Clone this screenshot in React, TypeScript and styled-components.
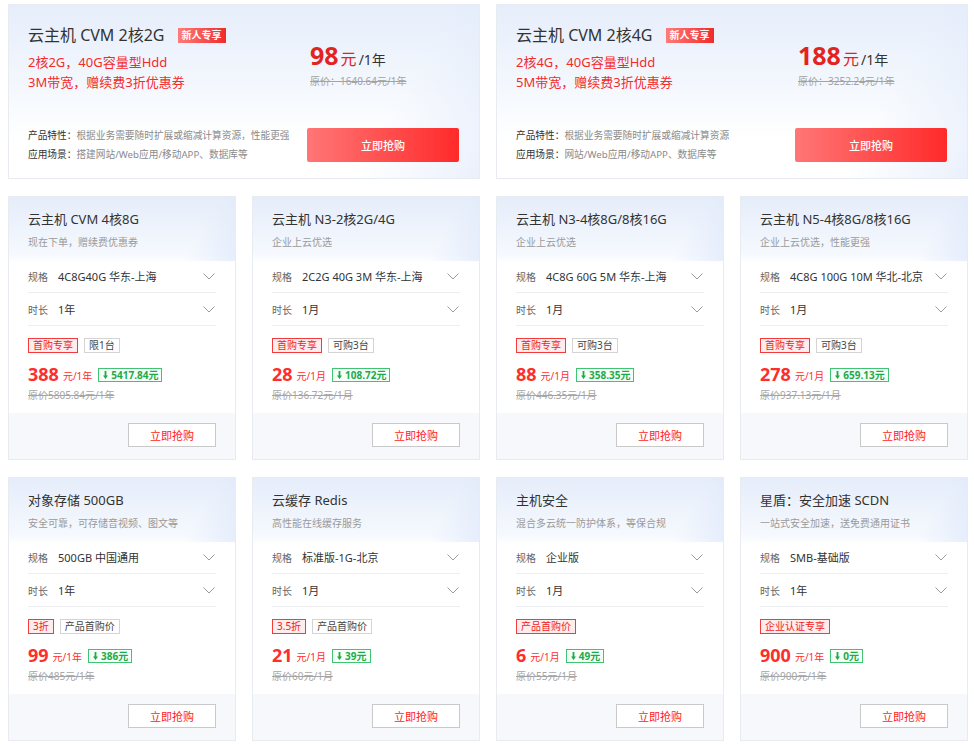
import React, { FC } from 'react';
import styled, { createGlobalStyle } from 'styled-components';

const GlobalStyle = createGlobalStyle`
  * {
    box-sizing: border-box;
  }
  body {
    margin: 0;
    background: #fff;
    color: #333;
    font-family: "Noto Sans", "Noto Sans CJK SC", sans-serif;
  }
`;

type TagKind = 'red' | 'gray';

interface Tag {
  text: string;
  kind: TagKind;
}

interface Product {
  title: string;
  sub: string;
  spec: string;
  dur: string;
  tags: Tag[];
  price: string;
  unit: string;
  save: string;
  orig: string;
}

interface Hero {
  title: string;
  lines: string[];
  price: string;
  orig: string;
  feature: string;
  scene: string;
}

const heroes: Hero[] = [
  {
    title: '云主机 CVM 2核2G',
    lines: ['2核2G，40G容量型Hdd', '3M带宽，赠续费3折优惠券'],
    price: '98',
    orig: '原价：1640.64元/1年',
    feature: '根据业务需要随时扩展或缩减计算资源，性能更强',
    scene: '搭建网站/Web应用/移动APP、数据库等',
  },
  {
    title: '云主机 CVM 2核4G',
    lines: ['2核4G，40G容量型Hdd', '5M带宽，赠续费3折优惠券'],
    price: '188',
    orig: '原价：3252.24元/1年',
    feature: '根据业务需要随时扩展或缩减计算资源',
    scene: '网站/Web应用/移动APP、数据库等',
  },
];

const firstBuy: Tag = { text: '首购专享', kind: 'red' };
const buy3: Tag = { text: '可购3台', kind: 'gray' };

const products: Product[] = [
  {
    title: '云主机 CVM 4核8G',
    sub: '现在下单，赠续费优惠券',
    spec: '4C8G40G 华东-上海',
    dur: '1年',
    tags: [firstBuy, { text: '限1台', kind: 'gray' }],
    price: '388',
    unit: '元/1年',
    save: '5417.84元',
    orig: '原价5805.84元/1年',
  },
  {
    title: '云主机 N3-2核2G/4G',
    sub: '企业上云优选',
    spec: '2C2G 40G 3M 华东-上海',
    dur: '1月',
    tags: [firstBuy, buy3],
    price: '28',
    unit: '元/1月',
    save: '108.72元',
    orig: '原价136.72元/1月',
  },
  {
    title: '云主机 N3-4核8G/8核16G',
    sub: '企业上云优选',
    spec: '4C8G 60G 5M 华东-上海',
    dur: '1月',
    tags: [firstBuy, buy3],
    price: '88',
    unit: '元/1月',
    save: '358.35元',
    orig: '原价446.35元/1月',
  },
  {
    title: '云主机 N5-4核8G/8核16G',
    sub: '企业上云优选，性能更强',
    spec: '4C8G 100G 10M 华北-北京',
    dur: '1月',
    tags: [firstBuy, buy3],
    price: '278',
    unit: '元/1月',
    save: '659.13元',
    orig: '原价937.13元/1月',
  },
  {
    title: '对象存储 500GB',
    sub: '安全可靠，可存储音视频、图文等',
    spec: '500GB 中国通用',
    dur: '1年',
    tags: [
      { text: '3折', kind: 'red' },
      { text: '产品首购价', kind: 'gray' },
    ],
    price: '99',
    unit: '元/1年',
    save: '386元',
    orig: '原价485元/1年',
  },
  {
    title: '云缓存 Redis',
    sub: '高性能在线缓存服务',
    spec: '标准版-1G-北京',
    dur: '1月',
    tags: [
      { text: '3.5折', kind: 'red' },
      { text: '产品首购价', kind: 'gray' },
    ],
    price: '21',
    unit: '元/1月',
    save: '39元',
    orig: '原价60元/1月',
  },
  {
    title: '主机安全',
    sub: '混合多云统一防护体系，等保合规',
    spec: '企业版',
    dur: '1月',
    tags: [{ text: '产品首购价', kind: 'red' }],
    price: '6',
    unit: '元/1月',
    save: '49元',
    orig: '原价55元/1月',
  },
  {
    title: '星盾：安全加速 SCDN',
    sub: '一站式安全加速，送免费通用证书',
    spec: 'SMB-基础版',
    dur: '1年',
    tags: [{ text: '企业认证专享', kind: 'red' }],
    price: '900',
    unit: '元/1年',
    save: '0元',
    orig: '原价900元/1年',
  },
];

const StyledPage = styled.div`
  display: grid;
  grid-template-columns: repeat(4, 228px);
  column-gap: 16px;
  row-gap: 17px;
  padding: 4px 0 0 8px;
`;

/* big promo cards */

const StyledHeroCard = styled.div`
  grid-column: span 2;
  height: 175px;
  display: grid;
  grid-template-columns: 1fr 152px;
  padding: 19px 20px 14px 19px;
  border: 1px solid #e8ebf0;
  background:
    linear-gradient(120deg, rgba(255, 255, 255, 0) 78%, rgba(220, 230, 250, 0.6) 100%),
    linear-gradient(180deg, #e6eefb 0%, #f3f7fd 45%, #ffffff 78%);
`;

const StyledHeroLeft = styled.div`
  display: flex;
  flex-direction: column;
  justify-content: space-between;
`;

const StyledHeroRight = styled.div`
  display: flex;
  flex-direction: column;
  justify-content: space-between;
  padding-bottom: 2px;
`;

const StyledHeroTitleRow = styled.div`
  display: flex;
  align-items: center;
  gap: 13px;
  height: 22px;
`;

const StyledHeroTitle = styled.div`
  font-size: 16px;
  line-height: 22px;
  color: #333;
`;

const StyledNewBadge = styled.span`
  height: 15px;
  padding: 0 4px;
  font-size: 10px;
  line-height: 15px;
  font-weight: 700;
  color: #fff;
  background: linear-gradient(90deg, #ff7b7b, #f12a2a);
`;

const StyledHeroLines = styled.div`
  margin-top: 6px;
  font-size: 13px;
  line-height: 20px;
  color: #f42b2b;
`;

const StyledHeroInfo = styled.div`
  font-size: 9.7px;
  line-height: 19px;
  color: #8a8a8a;
  white-space: nowrap;
`;

const StyledInfoLabel = styled.span`
  color: #333;
`;

const StyledHeroPrice = styled.div`
  display: flex;
  align-items: baseline;
  margin: 16px 0 0 3px;
  height: 30px;
  line-height: 30px;
`;

const StyledHeroAmount = styled.span`
  font-size: 25px;
  font-weight: 700;
  color: #e3231f;
`;

const StyledHeroYuan = styled.span`
  margin-left: 2px;
  font-size: 16px;
  color: #e3231f;
`;

const StyledHeroPer = styled.span`
  margin-left: 2px;
  font-size: 14px;
  color: #333;
`;

const StyledHeroOrig = styled.div`
  margin: 3px 0 0 3px;
  font-size: 10px;
  line-height: 16px;
  color: #a3a3a3;
  text-decoration: line-through;
`;

const StyledHeroPriceBox = styled.div``;

const StyledHeroButton = styled.button`
  width: 152px;
  height: 34px;
  border: none;
  border-radius: 2px;
  font-family: inherit;
  font-size: 11px;
  font-weight: 500;
  color: #fff;
  background: linear-gradient(90deg, #ff7676, #ff2a2a);
  cursor: pointer;
`;

/* small product cards */

const StyledCard = styled.div`
  display: flex;
  flex-direction: column;
  height: 264px;
  border: 1px solid #e8ebf0;
  background:
    linear-gradient(120deg, rgba(255, 255, 255, 0) 80%, rgba(214, 226, 250, 0.55) 100%) 0 0 / 100% 64px no-repeat,
    linear-gradient(180deg, #e5edfa 0px, #f6f9fe 58px, #ffffff 66px);
`;

const StyledCardBody = styled.div`
  padding: 12px 19px 0 19px;
`;

const StyledCardTitle = styled.div`
  font-size: 13px;
  line-height: 20px;
  color: #333;
  white-space: nowrap;
`;

const StyledCardSub = styled.div`
  margin-top: 5px;
  font-size: 10px;
  line-height: 16px;
  color: #9a9a9a;
  white-space: nowrap;
`;

const StyledSelects = styled.div`
  margin-top: 10px;
`;

const StyledSelectRow = styled.div`
  display: flex;
  align-items: center;
  height: 33px;
  border-bottom: 1px solid #eceef2;
`;

const StyledSelectLabel = styled.span`
  margin-right: 10px;
  font-size: 10px;
  color: #666;
`;

const StyledSelectValue = styled.span`
  flex: 1;
  font-size: 11px;
  color: #333;
  white-space: nowrap;
`;

const StyledChevron = styled.svg`
  margin-right: 1px;
`;

const StyledTags = styled.div`
  display: flex;
  gap: 6px;
  margin-top: 12px;
`;

const StyledTag = styled.span<{ $kind: TagKind }>`
  height: 15px;
  padding: 0 4px;
  font-size: 10px;
  line-height: 13px;
  border: 1px solid ${(p) => (p.$kind === 'red' ? '#f33b3b' : '#d4d4d4')};
  color: ${(p) => (p.$kind === 'red' ? '#f01c1c' : '#444')};
  background: ${(p) => (p.$kind === 'red' ? '#ffecec' : '#fff')};
`;

const StyledPriceRow = styled.div`
  display: flex;
  align-items: center;
  margin-top: 9px;
  height: 24px;
`;

const StyledAmount = styled.span`
  font-size: 18px;
  line-height: 24px;
  font-weight: 700;
  color: #ff2d2d;
`;

const StyledUnit = styled.span`
  margin: 3px 0 0 4px;
  font-size: 10px;
  color: #ff2d2d;
`;

const StyledSave = styled.span`
  display: inline-flex;
  align-items: center;
  gap: 3px;
  height: 14px;
  margin: 2px 0 0 6px;
  padding: 0 3px 0 4px;
  font-size: 10px;
  font-weight: 700;
  line-height: 12px;
  color: #1eaa4b;
  border: 1px solid #41c471;
  background: #f5fff8;
`;

const StyledOrig = styled.div`
  margin-top: 2px;
  font-size: 10px;
  line-height: 14px;
  color: #a5a5a5;
  text-decoration: line-through;
`;

const StyledCardFooter = styled.div`
  display: flex;
  justify-content: flex-end;
  align-items: center;
  margin-top: auto;
  height: 46px;
  padding: 0 19px 2px;
  background: #f6f8fc;
`;

const StyledBuyButton = styled.button`
  width: 88px;
  height: 24px;
  border: 1px solid #c9c9c9;
  background: #fff;
  font-family: inherit;
  font-size: 11px;
  color: #ff1c1c;
  cursor: pointer;
`;

const Chevron: FC = () => (
  <StyledChevron width="12" height="7" viewBox="0 0 12 7">
    <polyline points="0.5,0.5 6,6 11.5,0.5" fill="none" stroke="#9a9a9a" strokeWidth="1" />
  </StyledChevron>
);

const DownArrow: FC = () => (
  <svg width="5" height="8" viewBox="0 0 5 8">
    <path d="M1.6 0h1.8v4.6H5L2.5 8 0 4.6h1.6z" fill="#1eaa4b" />
  </svg>
);

const HeroCard: FC<{ hero: Hero }> = ({ hero }) => (
  <StyledHeroCard>
    <StyledHeroLeft>
      <div>
        <StyledHeroTitleRow>
          <StyledHeroTitle>{hero.title}</StyledHeroTitle>
          <StyledNewBadge>新人专享</StyledNewBadge>
        </StyledHeroTitleRow>
        <StyledHeroLines>
          {hero.lines.map((line) => (
            <div key={line}>{line}</div>
          ))}
        </StyledHeroLines>
      </div>
      <StyledHeroInfo>
        <div>
          <StyledInfoLabel>产品特性：</StyledInfoLabel>
          {hero.feature}
        </div>
        <div>
          <StyledInfoLabel>应用场景：</StyledInfoLabel>
          {hero.scene}
        </div>
      </StyledHeroInfo>
    </StyledHeroLeft>
    <StyledHeroRight>
      <StyledHeroPriceBox>
        <StyledHeroPrice>
          <StyledHeroAmount>{hero.price}</StyledHeroAmount>
          <StyledHeroYuan>元</StyledHeroYuan>
          <StyledHeroPer>/1年</StyledHeroPer>
        </StyledHeroPrice>
        <StyledHeroOrig>{hero.orig}</StyledHeroOrig>
      </StyledHeroPriceBox>
      <StyledHeroButton>立即抢购</StyledHeroButton>
    </StyledHeroRight>
  </StyledHeroCard>
);

const ProductCard: FC<{ item: Product }> = ({ item }) => (
  <StyledCard>
    <StyledCardBody>
      <StyledCardTitle>{item.title}</StyledCardTitle>
      <StyledCardSub>{item.sub}</StyledCardSub>
      <StyledSelects>
        <StyledSelectRow>
          <StyledSelectLabel>规格</StyledSelectLabel>
          <StyledSelectValue>{item.spec}</StyledSelectValue>
          <Chevron />
        </StyledSelectRow>
        <StyledSelectRow>
          <StyledSelectLabel>时长</StyledSelectLabel>
          <StyledSelectValue>{item.dur}</StyledSelectValue>
          <Chevron />
        </StyledSelectRow>
      </StyledSelects>
      <StyledTags>
        {item.tags.map((tag) => (
          <StyledTag key={tag.text} $kind={tag.kind}>
            {tag.text}
          </StyledTag>
        ))}
      </StyledTags>
      <StyledPriceRow>
        <StyledAmount>{item.price}</StyledAmount>
        <StyledUnit>{item.unit}</StyledUnit>
        <StyledSave>
          <DownArrow />
          {item.save}
        </StyledSave>
      </StyledPriceRow>
      <StyledOrig>{item.orig}</StyledOrig>
    </StyledCardBody>
    <StyledCardFooter>
      <StyledBuyButton>立即抢购</StyledBuyButton>
    </StyledCardFooter>
  </StyledCard>
);

const App: FC = () => (
  <>
    <GlobalStyle />
    <StyledPage>
      {heroes.map((hero) => (
        <HeroCard key={hero.title} hero={hero} />
      ))}
      {products.map((item) => (
        <ProductCard key={item.title} item={item} />
      ))}
    </StyledPage>
  </>
);

export default App;
